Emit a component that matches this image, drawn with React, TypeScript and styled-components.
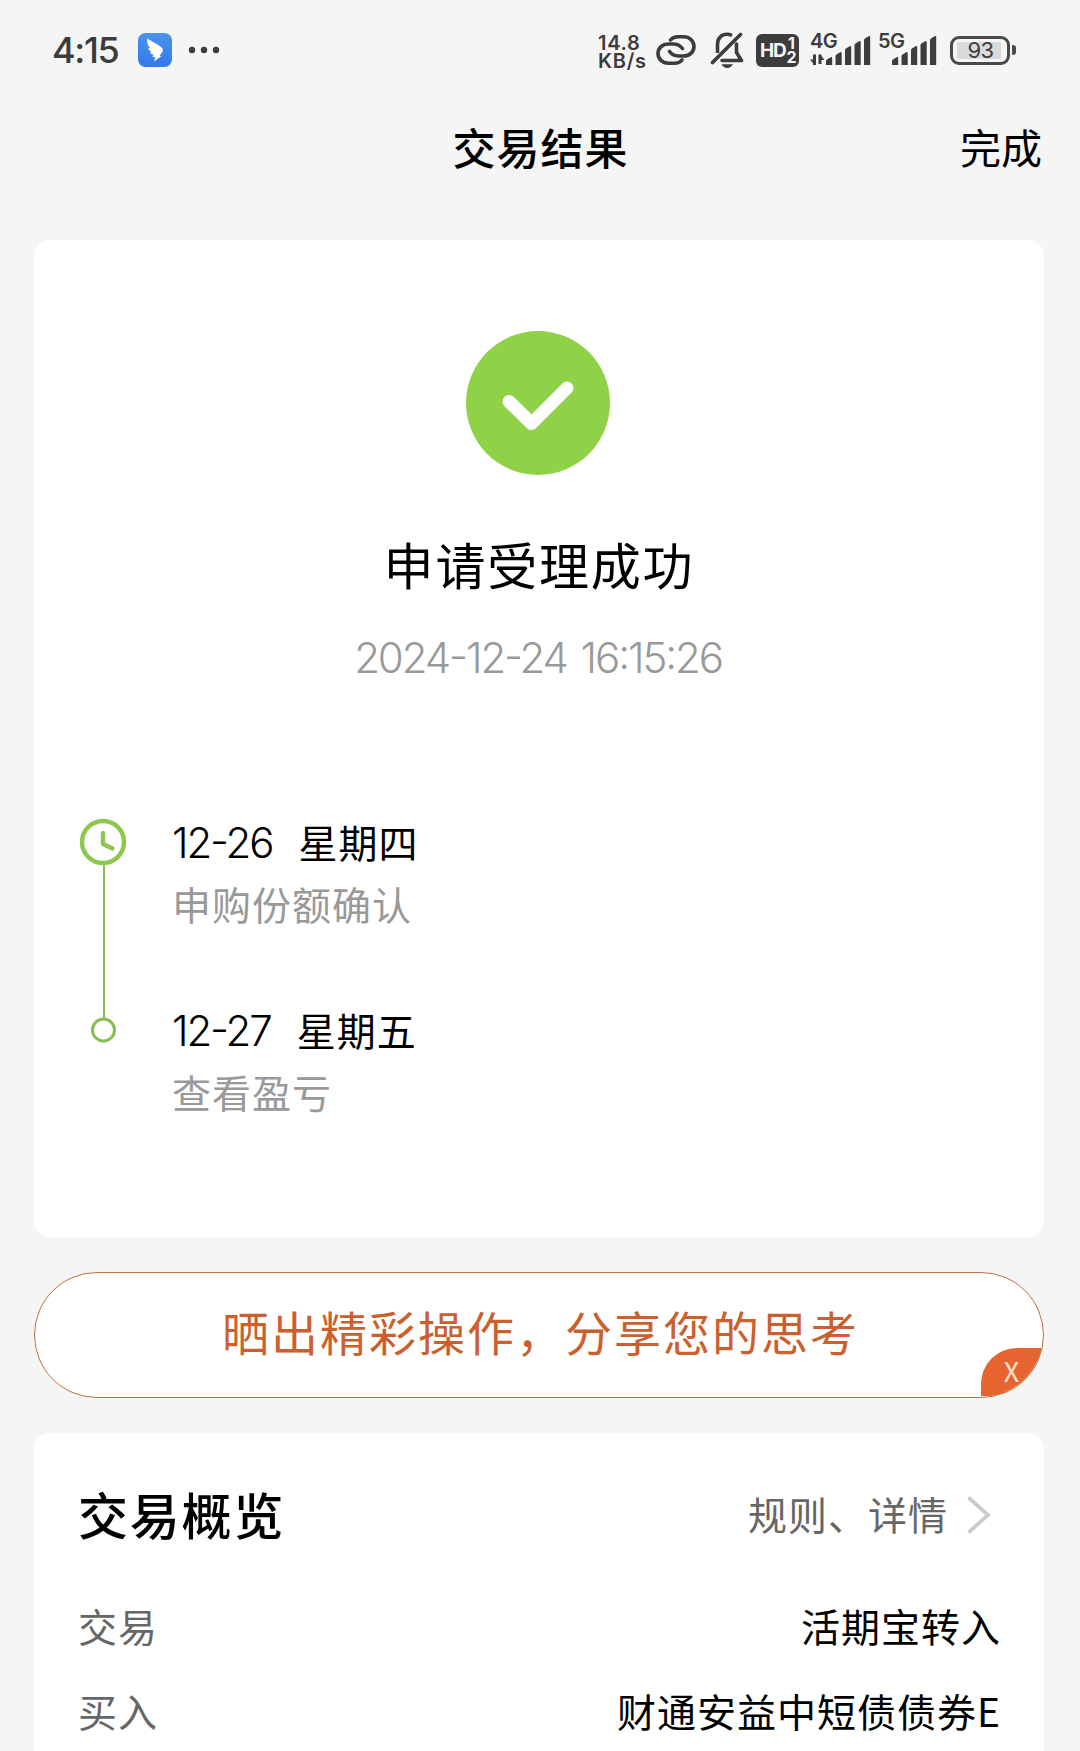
import React from "react";
import styled, { createGlobalStyle } from "styled-components";

const Global = createGlobalStyle`
  * { box-sizing: border-box; }
  body { margin: 0; background: #f5f5f5; }
`;

const cjk = `"Noto Sans CJK SC", sans-serif`;
const latin = `Inter, "Noto Sans CJK SC", sans-serif`;
const ink = "#3c3c3c";
const green = "#8fd147";

const Page = styled.main`
  width: 1080px;
  height: 1751px;
  overflow: hidden;
  background: #f5f5f5;
  font-family: ${cjk};
  color: #000;
  display: flex;
  flex-direction: column;
`;

const StatusBar = styled.header`
  flex: none;
  height: 100px;
  padding: 0 64px 0 52px;
  display: flex;
  justify-content: space-between;
  align-items: center;
  color: ${ink};
  font-family: ${latin};
`;

const StatusGroup = styled.div`
  display: flex;
  align-items: center;
  svg { display: block; flex: none; }
`;

const Time = styled.span`
  width: 86px;
  font-size: 36px;
  line-height: 40px;
  font-weight: 500;
  letter-spacing: -1.3px;
`;

const Dots = styled.svg`
  margin-left: 16px;
`;

const Speed = styled.div`
  width: 58px;
  padding-top: 3px;
  font-size: 20px;
  line-height: 18px;
  font-weight: 600;
`;

const SpeedLine = styled.div<{ $gap: number }>`
  letter-spacing: ${(p) => p.$gap}px;
`;

const HdBox = styled.div`
  width: 43px;
  height: 33px;
  margin: 0 11px 0 12px;
  padding-left: 4px;
  border-radius: 6px;
  background: ${ink};
  color: #f5f5f5;
  display: flex;
  align-items: center;
  font-size: 19px;
  font-weight: 700;
  letter-spacing: -1.2px;
`;

const HdDigits = styled.span`
  display: flex;
  flex-direction: column;
  margin-left: 1px;
  font-size: 16px;
  line-height: 14px;
  font-weight: 700;
  text-align: center;
`;

const Signal = styled.div<{ $width: number }>`
  width: ${(p) => p.$width}px;
  height: 30px;
  display: grid;
`;

const Network = styled.span`
  grid-area: 1 / 1;
  font-size: 20px;
  line-height: 12px;
  font-weight: 600;
  letter-spacing: -0.5px;
`;

const Bars = styled.svg`
  grid-area: 1 / 1;
`;

const Battery = styled.div`
  width: 60px;
  height: 29px;
  margin-left: 12px;
  border: 3px solid #4a4a4a;
  border-radius: 9px;
  padding: 3px 5px 3px 4px;
`;

const BatteryFill = styled.div`
  width: 44px;
  height: 17px;
  border-radius: 2px;
  background: #dadada;
  font-size: 22px;
  line-height: 17px;
  letter-spacing: -0.5px;
  text-align: center;
  padding-left: 3px;
`;

const BatteryCap = styled.div`
  width: 4px;
  height: 10px;
  margin-left: 2px;
  border-radius: 1px 3px 3px 1px;
  background: #4a4a4a;
`;

const NavBar = styled.nav`
  flex: none;
  height: 140px;
  padding: 18px 38px 0 38px;
  display: grid;
  grid-template-columns: 1fr auto 1fr;
  align-items: start;
  line-height: 56px;
`;

const NavTitle = styled.h1`
  grid-column: 2;
  margin: 0;
  padding-left: 1px;
  font-size: 43px;
  font-weight: 500;
  letter-spacing: 1px;
`;

const Done = styled.a`
  justify-self: end;
  font-size: 41px;
`;

const Card = styled.section<{ $height: number }>`
  flex: none;
  width: 1010px;
  height: ${(p) => p.$height}px;
  margin-left: 34px;
  border-radius: 16px;
  background: #fff;
`;

const Result = styled.div`
  padding: 91px 2px 0 0;
  display: flex;
  flex-direction: column;
  align-items: center;
`;

const ResultTitle = styled.h2`
  margin: 56px 0 0;
  padding-left: 2px;
  font-size: 50px;
  line-height: 64px;
  font-weight: 400;
  letter-spacing: 1.8px;
`;

const Stamp = styled.time`
  margin-top: 38px;
  font-family: ${latin};
  font-feature-settings: "case" 1;
  font-size: 42px;
  line-height: 50px;
  font-weight: 350;
  letter-spacing: -2.1px;
  word-spacing: 4px;
  color: #999;
`;

const Timeline = styled.div`
  margin-top: 134px;
  padding-left: 45px;
  display: flex;
  svg { display: block; }
`;

const Steps = styled.ol`
  list-style: none;
  margin: 0;
  padding: 0 0 0 45px;
`;

const Step = styled.li`
  height: 188px;
`;

const StepDate = styled.div`
  display: flex;
  gap: 26px;
  height: 52px;
  line-height: 52px;
`;

const StepDay = styled.span`
  font-family: ${latin};
  font-feature-settings: "case" 1;
  font-size: 42px;
  font-weight: 350;
  letter-spacing: -2.1px;
`;

const StepWeek = styled.span`
  font-size: 39px;
  line-height: 49px;
  letter-spacing: 1px;
`;

const StepNote = styled.div`
  margin-top: 8px;
  font-size: 39px;
  line-height: 52px;
  letter-spacing: 1px;
  color: #999;
`;

const Share = styled.button`
  flex: none;
  position: relative;
  width: 1010px;
  height: 126px;
  margin: 35px 0 35px 34px;
  padding: 0 0 10px 3px;
  border: 1.5px solid #c4703f;
  border-radius: 63px;
  overflow: hidden;
  background: #fff;
  font-family: ${cjk};
  font-size: 47px;
  letter-spacing: 2px;
  color: #cb5f2e;
`;

const Close = styled.span`
  position: absolute;
  right: 0;
  bottom: 1px;
  width: 62px;
  height: 48px;
  padding-right: 1px;
  border-top-left-radius: 36px;
  background: #e6642f;
  color: #fbe3d2;
  font-size: 27px;
  line-height: 46px;
  letter-spacing: 0;
  text-align: center;
`;

const Overview = styled.div`
  padding: 48px 43px 0 44px;
`;

const OverviewHead = styled.div`
  height: 64px;
  padding-right: 10px;
  display: flex;
  justify-content: space-between;
  align-items: center;
`;

const OverviewTitle = styled.h2`
  margin: 0;
  font-size: 50px;
  line-height: 64px;
  font-weight: 500;
  letter-spacing: 1.8px;
`;

const Rules = styled.a`
  display: flex;
  align-items: center;
  gap: 19px;
  font-size: 39px;
  letter-spacing: 1px;
  color: #666;
`;

const Row = styled.div`
  height: 85px;
  display: flex;
  justify-content: space-between;
  font-size: 39px;
  line-height: 52px;
  letter-spacing: 1px;
`;

const Rows = styled.div`
  padding-top: 54px;
`;

const Label = styled.span`
  color: #666;
`;

const Value = styled.span``;

const SignalBars = ({ x }: { x: number }) => (
  <g fill={ink}>
    {[7, 12, 18, 23, 28].map((h, i) => (
      <path key={h} d={`M${x + i * 9.5} 30v${-h + 3}q0-1 1-1.6l3.600-2.2q1.600-.6 1.600 1v${h - 0.2}z`} />
    ))}
  </g>
);

const steps = [
  { day: "12-26", week: "星期四", note: "申购份额确认" },
  { day: "12-27", week: "星期五", note: "查看盈亏" },
];

const rows = [
  { label: "交易", value: "活期宝转入" },
  { label: "买入", value: "财通安益中短债债券E" },
];

export default function App() {
  return (
    <Page>
      <Global />
      <StatusBar>
        <StatusGroup>
          <Time>4:15</Time>
          <svg width="34" height="34" viewBox="0 0 34 34">
            <defs>
              <linearGradient id="app" x1="0" y1="0" x2="0" y2="1">
                <stop offset="0" stopColor="#4a94ea" />
                <stop offset="1" stopColor="#3478ec" />
              </linearGradient>
            </defs>
            <rect width="34" height="34" rx="7.500" fill="url(#app)" />
            <path d="M9.500 5C12 8.500 19 10 23.500 14.500c1.800 1.800 1.700 3 .8 4.500L21.500 23h2L16 28.500l1.200-4.500h-2.700l1-2.500c-2 0-3-1-3.500-2l2-.5c-2.500-1-3.500-2.500-4-4l2.500.3C9.500 13 8.500 9 9.500 5z" fill="#fff" />
          </svg>
          <Dots width="32" height="8" viewBox="0 0 32 8">
            <g fill={ink}>
              <circle cx="4" cy="4" r="3.200" />
              <circle cx="16" cy="4" r="3.200" />
              <circle cx="28" cy="4" r="3.200" />
            </g>
          </Dots>
        </StatusGroup>
        <StatusGroup>
          <Speed>
            <SpeedLine $gap={0.7}>14.8</SpeedLine>
            <SpeedLine $gap={0.7}>KB/s</SpeedLine>
          </Speed>
          <svg width="40" height="32" viewBox="0 0 40 32" fill="none" stroke={ink} strokeWidth="3.600" strokeLinecap="round">
            <path d="M14.500 6Q17 2.800 22 2.800H27.500C34 2.800 38 7.500 38 12.500S34 22 27.500 22H22.500Q17 22 13.500 17.500" />
            <path d="M26 26Q23.500 29.200 18.500 29.200H12.500C6 29.200 2 24.500 2 19.500S6 10 12.500 10H17.500Q23 10 26.500 14.500" />
          </svg>
          <svg width="48" height="36" viewBox="-14 0 48 36" fill="none" stroke={ink} strokeWidth="3.600" strokeLinecap="round">
            <path d="M2.500 30.500L30.500 2.500" />
            <path d="M7.500 21V12.500C7.500 6 11.500 2.300 17 2.300Q19.500 2.300 22 3.500" strokeLinecap="butt" />
            <path d="M26.500 12V20.500L31.500 28.500H12" strokeLinejoin="round" />
            <path d="M11.500 32.300H23Q21 36 17.200 36T11.500 32.300z" fill={ink} stroke="none" />
          </svg>
          <HdBox>
            HD
            <HdDigits>
              <span>1</span>
              <span>2</span>
            </HdDigits>
          </HdBox>
          <Signal $width={68}>
            <Network>4G</Network>
            <Bars width="62" height="30" viewBox="0 0 62 30">
              <SignalBars x={16} />
              <path d="M4.500 19.500V30M10 29V19.500" stroke={ink} strokeWidth="3" fill="none" />
              <path d="M0 24.500h4.500V30zM10 19l4.500 6H10z" fill={ink} />
            </Bars>
          </Signal>
          <Signal $width={60}>
            <Network>5G</Network>
            <Bars width="60" height="30" viewBox="0 0 60 30">
              <SignalBars x={14} />
            </Bars>
          </Signal>
          <Battery>
            <BatteryFill>93</BatteryFill>
          </Battery>
          <BatteryCap />
        </StatusGroup>
      </StatusBar>

      <NavBar>
        <NavTitle>交易结果</NavTitle>
        <Done>完成</Done>
      </NavBar>

      <Card $height={997}>
        <Result>
          <svg width="144" height="144" viewBox="0 0 144 144">
            <circle cx="72" cy="72" r="72" fill={green} />
            <path d="M43 70.500L65.500 92.500L101 57" fill="none" stroke="#fff" strokeWidth="13" strokeLinecap="round" strokeLinejoin="round" />
          </svg>
          <ResultTitle>申请受理成功</ResultTitle>
          <Stamp>2024-12-24 16:15:26</Stamp>
        </Result>
        <Timeline>
          <svg width="48" height="228" viewBox="0 0 48 228" fill="none" stroke="#8cc850">
            <path d="M25 47V202" strokeWidth="2" stroke="#87bd52" />
            <circle cx="24" cy="25" r="21" strokeWidth="4.400" />
            <path d="M24 16V27L33.500 31.500" strokeWidth="4.400" strokeLinecap="round" strokeLinejoin="round" />
            <circle cx="24.500" cy="213" r="11" strokeWidth="3" stroke="#87bd52" />
          </svg>
          <Steps>
            {steps.map((s) => (
              <Step key={s.day}>
                <StepDate>
                  <StepDay>{s.day}</StepDay>
                  <StepWeek>{s.week}</StepWeek>
                </StepDate>
                <StepNote>{s.note}</StepNote>
              </Step>
            ))}
          </Steps>
        </Timeline>
      </Card>

      <Share>
        晒出精彩操作，分享您的思考
        <Close>X</Close>
      </Share>

      <Card $height={400}>
        <Overview>
          <OverviewHead>
            <OverviewTitle>交易概览</OverviewTitle>
            <Rules>
              规则、详情
              <svg width="24" height="42" viewBox="0 -4 24 42" fill="none" stroke="#ccc" strokeWidth="3.800">
                <path d="M1.500 1.500L21 19L1.500 36.500" />
              </svg>
            </Rules>
          </OverviewHead>
          <Rows>
            {rows.map((r) => (
              <Row key={r.label}>
                <Label>{r.label}</Label>
                <Value>{r.value}</Value>
              </Row>
            ))}
          </Rows>
        </Overview>
      </Card>
    </Page>
  );
}
